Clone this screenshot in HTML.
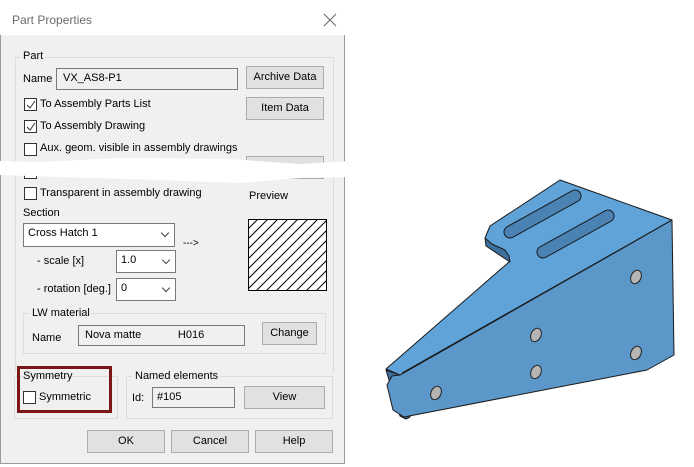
<!DOCTYPE html>
<html><head><style>
body{margin:0;width:694px;height:467px;background:#fff;position:relative;overflow:hidden;font-family:"Liberation Sans",Arial,sans-serif;font-size:11px;color:#000}
.a{position:absolute}
.dlg{left:0;top:0;width:345px;height:464px;background:#f0f0f0;border:1px solid #9a9a9a;border-top:none;box-sizing:border-box}
.title{left:0;top:0;width:345px;height:35px;background:#fff}
.grp{border:1px solid #dcdcdc;box-sizing:border-box}
.lbl{background:#f0f0f0;padding:0 2px}
.inp{background:#f0f0f0;border:1px solid #7a7a7a;box-sizing:border-box;padding:3px 0 0 6px}
.wht{background:#fff;border:1px solid #7a7a7a;box-sizing:border-box;padding:3px 0 0 4px}
.btn{background:#e1e1e1;border:1px solid #adadad;box-sizing:border-box;text-align:center;line-height:20px}
.cb{width:13px;height:13px;border:1px solid #333;background:#fff;box-sizing:border-box}
.chev{position:absolute;right:6px;top:6px;width:5px;height:5px;border-right:1px solid #444;border-bottom:1px solid #444;transform:rotate(45deg)}
</style></head><body>
<div class="a dlg"></div>
<div class="a title"></div>
<div class="a" style="left:12px;top:13px;font-size:12px;color:#6d6d6d">Part Properties</div>
<svg class="a" style="left:323px;top:13px" width="14" height="14"><path d="M1 1L13 13M13 1L1 13" stroke="#666" stroke-width="1"/></svg>

<div class="a grp" style="left:15px;top:57px;width:319px;height:315px;border-bottom:none"></div>
<div class="a lbl" style="left:21px;top:50px">Part</div>
<div class="a" style="left:23px;top:73px">Name</div>
<div class="a inp" style="left:56px;top:68px;width:182px;height:22px">VX_AS8-P1</div>
<div class="a btn" style="left:246px;top:66px;width:78px;height:23px">Archive Data</div>
<div class="a btn" style="left:246px;top:97px;width:78px;height:23px">Item Data</div>
<div class="a btn" style="left:246px;top:156px;width:78px;height:23px"></div>

<div class="a cb" style="left:24px;top:98px"></div><svg class="a" style="left:26px;top:100px" width="10" height="10"><path d="M1 5L4 8L9 1" fill="none" stroke="#333"/></svg>
<div class="a" style="left:40px;top:98px">To Assembly Parts List</div>
<div class="a cb" style="left:24px;top:120px"></div><svg class="a" style="left:26px;top:122px" width="10" height="10"><path d="M1 5L4 8L9 1" fill="none" stroke="#333"/></svg>
<div class="a" style="left:40px;top:120px">To Assembly Drawing</div>
<div class="a cb" style="left:24px;top:143px"></div>
<div class="a" style="left:40px;top:142px">Aux. geom. visible in assembly drawings</div>
<div class="a cb" style="left:24px;top:166px"></div>
<div class="a" style="left:40px;top:165px">Section is not made in assembly drawing</div>
<div class="a cb" style="left:24px;top:187px"></div>
<div class="a" style="left:40px;top:187px">Transparent in assembly drawing</div>
<svg class="a" style="left:0;top:155px" width="350" height="30"><path d="M0 6L40 7L120 3L230 4L300 9L350 6L350 22L300 23L240 28L130 24L60 22L0 20Z" fill="#fff"/></svg>

<div class="a" style="left:23px;top:207px">Section</div>
<div class="a wht" style="left:23px;top:223px;width:152px;height:24px">Cross Hatch 1<div class="chev"></div></div>
<div class="a" style="left:183px;top:238px;font-size:10px">---&gt;</div>
<div class="a" style="left:37px;top:255px">- scale [x]</div>
<div class="a wht" style="left:116px;top:250px;width:60px;height:23px">1.0<div class="chev"></div></div>
<div class="a" style="left:37px;top:283px">- rotation [deg.]</div>
<div class="a wht" style="left:116px;top:278px;width:60px;height:23px">0<div class="chev"></div></div>

<div class="a" style="left:249px;top:190px">Preview</div>
<svg class="a" style="left:248px;top:219px" width="79" height="72">
<defs><clipPath id="c"><rect x="0" y="0" width="79" height="72"/></clipPath></defs>
<rect x="0.5" y="0.5" width="78" height="71" fill="#fff" stroke="#000"/>
<g clip-path="url(#c)" stroke="#000" stroke-width="1">
<path d="M0 10L10 0M0 20L20 0M0 30L30 0M0 40L40 0M0 50L50 0M0 60L60 0M0 70L70 0M0 80L80 0M10 80L90 0M20 80L100 0M30 80L110 0M40 80L120 0M50 80L130 0M60 80L140 0M70 80L150 0"/>
</g></svg>

<div class="a grp" style="left:23px;top:313px;width:303px;height:41px"></div>
<div class="a lbl" style="left:30px;top:307px">LW material</div>
<div class="a" style="left:32px;top:332px">Name</div>
<div class="a inp" style="left:78px;top:325px;width:167px;height:21px">Nova matte&nbsp;&nbsp;&nbsp;&nbsp;&nbsp;&nbsp;&nbsp;&nbsp;&nbsp;&nbsp;&nbsp;&nbsp;H016</div>
<div class="a btn" style="left:262px;top:322px;width:55px;height:23px">Change</div>

<div class="a grp" style="left:14px;top:376px;width:104px;height:43px"></div>
<div class="a grp" style="left:126px;top:376px;width:207px;height:43px"></div>
<div class="a" style="left:17px;top:366px;width:95px;height:47px;border:3px solid #7a1616;box-sizing:border-box"></div>
<div class="a lbl" style="left:21px;top:370px;background:none">Symmetry</div>
<div class="a cb" style="left:23px;top:391px"></div>
<div class="a" style="left:39px;top:391px">Symmetric</div>
<div class="a lbl" style="left:133px;top:370px">Named elements</div>
<div class="a" style="left:132px;top:392px">Id:</div>
<div class="a inp" style="left:152px;top:387px;width:83px;height:21px;padding-left:4px">#105</div>
<div class="a btn" style="left:244px;top:386px;width:81px;height:23px">View</div>

<div class="a btn" style="left:87px;top:430px;width:78px;height:23px">OK</div>
<div class="a btn" style="left:171px;top:430px;width:78px;height:23px">Cancel</div>
<div class="a btn" style="left:255px;top:430px;width:78px;height:23px">Help</div>

<svg class="a" style="left:380px;top:170px" width="310" height="260">
<g stroke="#1a1a1a" stroke-width="1" stroke-linejoin="round">
<path d="M6 200L20 246L26 249L30 247L20 205Z" fill="#3f6f9c"/>
<path d="M12 206L20 205L292 50L294 185L267 200L24 247L13 240L7 215Z" fill="#5b97c8"/>
<path d="M6 199L129 92L125 83L112 77L105 68L110 56L180 10L292 50L20 205Z" fill="#5fa3d8"/>
<path d="M105 68L106 76L130 92L129 86L125 80L112 74Z" fill="#3f6f9c"/>
<path d="M22 203L292 50" fill="none"/>
</g>
<g stroke-linecap="round">
<path d="M130 62L195 26M163 82L228 46" stroke="#1a1a1a" stroke-width="13"/>
<path d="M130 62L195 26M163 82L228 46" stroke="#4b82b4" stroke-width="11"/>
</g>
<g fill="#b5b5b5" stroke="#222">
<ellipse cx="256" cy="107" rx="5" ry="7" transform="rotate(25 256 107)"/>
<ellipse cx="156" cy="165" rx="5" ry="7" transform="rotate(25 156 165)"/>
<ellipse cx="156" cy="202" rx="5" ry="7" transform="rotate(25 156 202)"/>
<ellipse cx="256" cy="183" rx="5" ry="7" transform="rotate(25 256 183)"/>
<ellipse cx="56" cy="223" rx="5" ry="7" transform="rotate(25 56 223)"/>
</g>
</svg>
</body></html>
